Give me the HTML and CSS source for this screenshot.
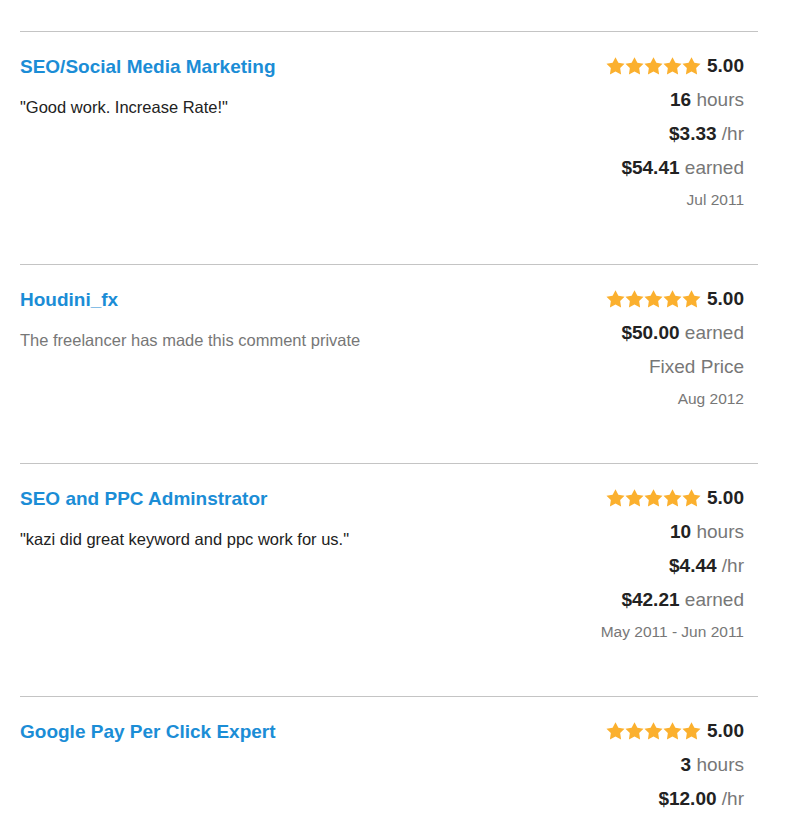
FILE: index.html
```html
<!DOCTYPE html>
<html lang="en">
<head>
<meta charset="utf-8">
<title>Work history</title>
<link rel="stylesheet" href="styles.css">
</head>
<body>
<div class="list">
  <section class="item">
    <div class="main">
      <a class="title" href="#">SEO/Social Media Marketing</a>
      <p class="comment">"Good work. Increase Rate!"</p>
    </div>
    <div class="stats">
      <div class="row rating"><svg class="stars" viewBox="0 0 95 18" width="95" height="18"><use href="#star" x="0"/><use href="#star" x="19"/><use href="#star" x="38"/><use href="#star" x="57"/><use href="#star" x="76"/></svg><b>5.00</b></div>
      <div class="row"><b>16</b> hours</div>
      <div class="row"><b>$3.33</b> /hr</div>
      <div class="row"><b>$54.41</b> earned</div>
      <div class="date">Jul 2011</div>
    </div>
  </section>
  <section class="item">
    <div class="main">
      <a class="title" href="#">Houdini_fx</a>
      <p class="comment private">The freelancer has made this comment private</p>
    </div>
    <div class="stats">
      <div class="row rating"><svg class="stars" viewBox="0 0 95 18" width="95" height="18"><use href="#star" x="0"/><use href="#star" x="19"/><use href="#star" x="38"/><use href="#star" x="57"/><use href="#star" x="76"/></svg><b>5.00</b></div>
      <div class="row"><b>$50.00</b> earned</div>
      <div class="row">Fixed Price</div>
      <div class="date">Aug 2012</div>
    </div>
  </section>
  <section class="item">
    <div class="main">
      <a class="title" href="#">SEO and PPC Adminstrator</a>
      <p class="comment">"kazi did great keyword and ppc work for us."</p>
    </div>
    <div class="stats">
      <div class="row rating"><svg class="stars" viewBox="0 0 95 18" width="95" height="18"><use href="#star" x="0"/><use href="#star" x="19"/><use href="#star" x="38"/><use href="#star" x="57"/><use href="#star" x="76"/></svg><b>5.00</b></div>
      <div class="row"><b>10</b> hours</div>
      <div class="row"><b>$4.44</b> /hr</div>
      <div class="row"><b>$42.21</b> earned</div>
      <div class="date">May 2011 - Jun 2011</div>
    </div>
  </section>
  <section class="item">
    <div class="main">
      <a class="title" href="#">Google Pay Per Click Expert</a>
    </div>
    <div class="stats">
      <div class="row rating"><svg class="stars" viewBox="0 0 95 18" width="95" height="18"><use href="#star" x="0"/><use href="#star" x="19"/><use href="#star" x="38"/><use href="#star" x="57"/><use href="#star" x="76"/></svg><b>5.00</b></div>
      <div class="row"><b>3</b> hours</div>
      <div class="row"><b>$12.00</b> /hr</div>
    </div>
  </section>
</div>
<svg width="0" height="0" class="defs">
  <defs>
    <path id="star" fill="#fbb02e" d="M9.5 0.3 L12.38 5.7 L18.54 6.7 L14.16 11.1 L15.08 17.4 L9.5 14.5 L3.92 17.4 L4.84 11.1 L0.46 6.7 L6.62 5.7 Z"/>
  </defs>
</svg>
</body>
</html>
```

FILE: styles.css
```css
html, body {
  margin: 0;
  padding: 0;
  background: #fff;
}
body {
  font-family: "Liberation Sans", Arial, sans-serif;
  color: #222;
}
.defs {
  position: absolute;
  width: 0;
  height: 0;
}
.list {
  margin-left: 20px;
  width: 738px;
  padding-top: 31px;
}
.item {
  border-top: 1px solid #c4c4c4;
  display: flex;
  justify-content: space-between;
  padding: 17px 14px 49px 0;
}
.main {
  padding-top: 1px;
}
.title {
  display: block;
  font-size: 19px;
  font-weight: bold;
  line-height: 34px;
  color: #1b8dd6;
  text-decoration: none;
}
.comment {
  margin: 13px 0 0;
  font-size: 16.5px;
  line-height: 20px;
  color: #222;
}
.comment.private {
  color: #777;
}
.stats {
  display: flex;
  flex-direction: column;
  align-items: flex-end;
}
.row {
  font-size: 19px;
  line-height: 34px;
  color: #777;
}
.row b {
  color: #222;
}
.rating {
  display: flex;
  align-items: center;
  gap: 6px;
}
.stars {
  display: block;
}
.date {
  font-size: 15.5px;
  line-height: 30px;
  color: #777;
}
```
